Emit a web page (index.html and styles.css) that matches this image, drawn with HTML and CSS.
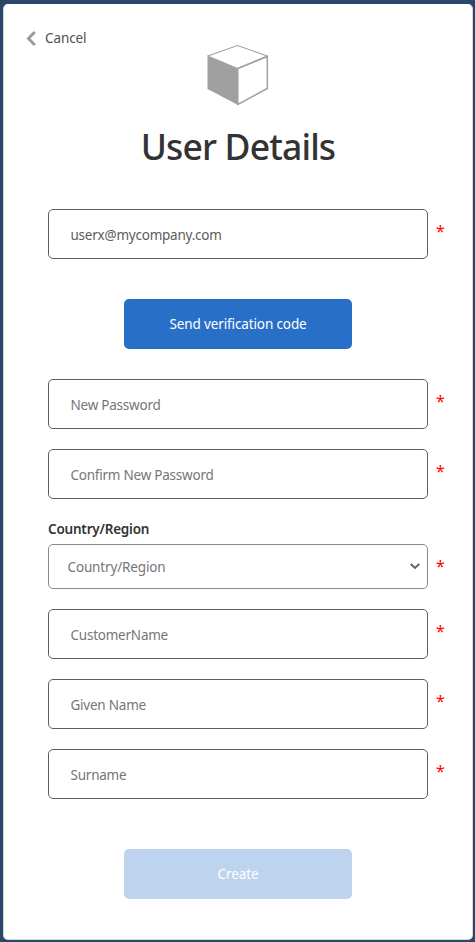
FILE: index.html
```html
<!DOCTYPE html>
<html lang="en">
<head>
  <meta charset="UTF-8" />
  <meta name="viewport" content="width=device-width, initial-scale=1.0"/>
  <title>User Details</title>
  <link rel="stylesheet" href="styles.css">
</head>
<body>
  <main class="panel">
    <header>
      <a class="cancel" href="#">
        <svg width="10" height="16" viewBox="0 0 10 16"><path d="M8.8 2 L2.4 8.5 L8.8 15" fill="none" stroke="#999" stroke-width="2.8"/></svg>
        <span>Cancel</span>
      </a>
      <svg class="logo" width="62" height="62" viewBox="0 0 62 62">
        <path d="M0.5 12 L31 23.5 V61 L0.5 45 Z" fill="#a0a0a0"/>
        <path d="M0.8 12 L30.5 1.5 L60.3 12 L30.5 24.5 Z" fill="#fff" stroke="#a0a0a0" stroke-width="1.1"/>
        <path d="M30.8 24.5 L60.3 12.5 V44.5 L30.8 60.5 Z" fill="#fff" stroke="#a0a0a0" stroke-width="1.5"/>
      </svg>
      <h1>User Details</h1>
    </header>

    <form>
      <div class="field required">
        <input type="text" value="userx@mycompany.com" aria-label="Email Address">
      </div>
      <button type="button" class="verify">Send verification code</button>
      <div class="field required">
        <input type="password" placeholder="New Password">
      </div>
      <div class="field required">
        <input type="password" placeholder="Confirm New Password">
      </div>
      <label for="country">Country/Region</label>
      <div class="field required country">
        <select id="country">
          <option>Country/Region</option>
        </select>
        <svg class="arrow" width="10" height="7" viewBox="0 0 10 7"><path d="M0.7 1 L5 5 L9.3 1" fill="none" stroke="#666" stroke-width="2"/></svg>
      </div>
      <div class="field required">
        <input type="text" placeholder="CustomerName">
      </div>
      <div class="field required">
        <input type="text" placeholder="Given Name">
      </div>
      <div class="field required">
        <input type="text" placeholder="Surname">
      </div>
      <button type="submit" class="create" disabled>Create</button>
    </form>
  </main>
</body>
</html>
```
FILE: styles.css
```css
* {
  margin: 0;
  padding: 0;
  box-sizing: border-box;
}

body {
  height: 942px;
  padding: 4px 2px 2px 3px;
  background: #2a4669;
  font-family: "Segoe UI", "Noto Sans", sans-serif;
  font-size: 14px;
  color: #333;
}

.panel {
  height: 936px;
  padding: 0 44px;
  background: #fff;
  border: 1px solid #d3d9e1;
  border-top-color: #fff;
  border-radius: 5px;
}

header {
  height: 204px;
  display: flex;
  flex-direction: column;
  align-items: center;
}

.cancel {
  align-self: flex-start;
  height: 20px;
  margin: 23px 0 0 -22px;
  display: flex;
  align-items: center;
  gap: 9px;
  color: #505050;
  font-size: 13.5px;
  letter-spacing: -0.1px;
  line-height: 20px;
  text-decoration: none;
}

.logo {
  margin-top: -4px;
}

h1 {
  margin-top: 16px;
  font-size: 35.5px;
  font-weight: 500;
  letter-spacing: -0.85px;
  line-height: 48px;
}

form {
  width: 380px;
  display: flex;
  flex-direction: column;
}

.field {
  position: relative;
  margin-bottom: 20px;
}

.field input {
  display: block;
  width: 380px;
  height: 50px;
  padding: 1px 22px 0 21.5px;
  border: 1px solid #5e5e5e;
  border-radius: 5px;
  background: #fff;
  color: #5c5c5c;
  font: inherit;
  font-size: 13.5px;
  letter-spacing: -0.23px;
}

.field input::placeholder {
  color: #767676;
  opacity: 1;
}

/* marker sits outside the box, right of the field */
.required::after {
  content: "*";
  position: absolute;
  left: 388px;
  top: 10px;
  color: #f00;
  font-size: 16px;
  line-height: 24px;
}

button {
  width: 228px;
  height: 50px;
  align-self: center;
  border: none;
  border-radius: 5px;
  background: #286fc7;
  color: #fff;
  font: inherit;
  font-size: 13.5px;
  letter-spacing: -0.12px;
}

.verify {
  margin: 20px 0 30px;
}

label {
  height: 25px;
  font-size: 13.5px;
  font-weight: 600;
  letter-spacing: -0.2px;
  line-height: 20px;
}

.country select {
  display: block;
  width: 380px;
  height: 45px;
  padding: 1px 18.5px 0;
  appearance: none;
  border: 1px solid #8b8b8b;
  border-radius: 5px;
  background: #fff;
  color: #767676;
  font: inherit;
  font-size: 13.5px;
  letter-spacing: -0.15px;
}

.country .arrow {
  position: absolute;
  right: 8px;
  top: 19px;
}

.create {
  margin-top: 30px;
  background: #bed3ee;
}
```
